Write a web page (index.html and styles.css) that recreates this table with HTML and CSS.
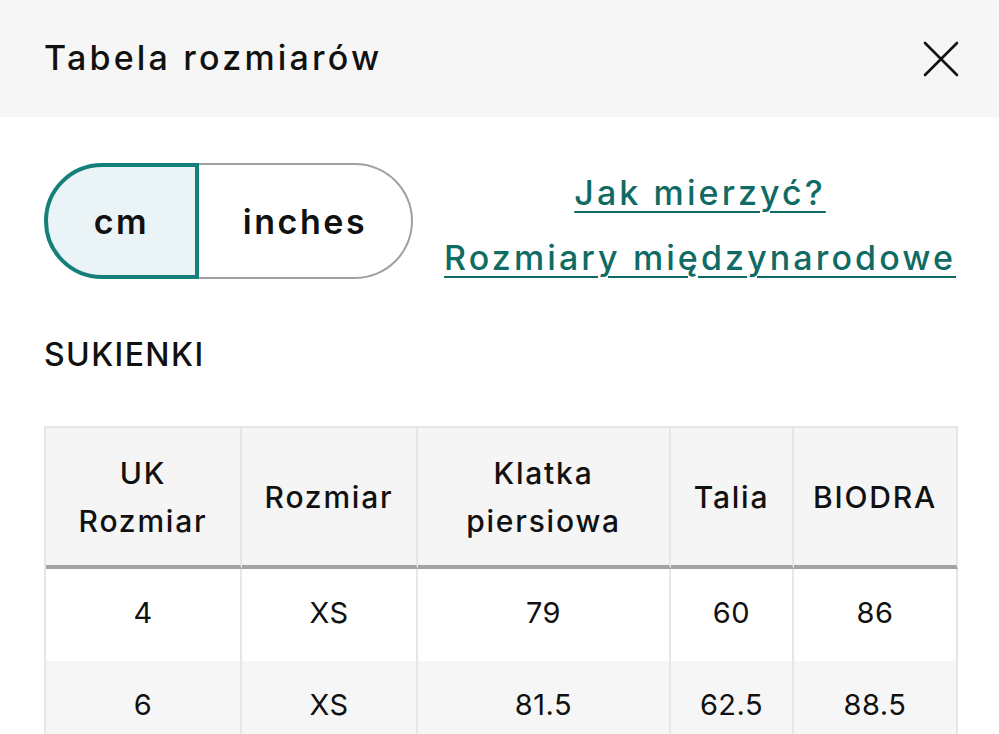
FILE: index.html
```html
<!DOCTYPE html>
<html lang="pl">
<head>
<meta charset="utf-8">
<title>Tabela rozmiarów</title>
<link rel="stylesheet" href="styles.css">
</head>
<body>
<header class="modal-header">
  <h1 class="modal-title">Tabela rozmiarów</h1>
  <button class="close-btn" aria-label="Zamknij">
    <svg width="36" height="36" viewBox="0 0 36 36"><path d="M2 2 L34 34 M34 2 L2 34" stroke="#111" stroke-width="2.6" fill="none" stroke-linecap="round"/></svg>
  </button>
</header>
<main class="content">
  <section class="controls">
    <div class="unit-toggle">
      <button class="unit unit-active">cm</button>
      <button class="unit unit-inactive">inches</button>
    </div>
    <nav class="links">
      <a href="#" class="link">Jak mierzyć?</a>
      <a href="#" class="link">Rozmiary międzynarodowe</a>
    </nav>
  </section>
  <h2 class="section-title">SUKIENKI</h2>
  <table class="size-table">
    <thead>
      <tr>
        <th class="c1">UK<br>Rozmiar</th>
        <th class="c2">Rozmiar</th>
        <th class="c3">Klatka<br>piersiowa</th>
        <th class="c4">Talia</th>
        <th class="c5">BIODRA</th>
      </tr>
    </thead>
    <tbody>
      <tr>
        <td>4</td><td>XS</td><td>79</td><td>60</td><td>86</td>
      </tr>
      <tr class="alt">
        <td>6</td><td>XS</td><td>81.5</td><td>62.5</td><td>88.5</td>
      </tr>
    </tbody>
  </table>
</main>
</body>
</html>
```
FILE: styles.css
```css
* { box-sizing: border-box; }
html, body { margin: 0; padding: 0; }
body {
  font-family: Inter, "Noto Sans", sans-serif;
  color: #111;
  background: #fff;
  width: 999px;
  height: 734px;
  overflow: hidden;
}
.modal-header {
  height: 117px;
  background: #f6f6f6;
  display: flex;
  align-items: center;
  justify-content: space-between;
  padding: 0 40px 0 44px;
}
.modal-title {
  margin: 0;
  font-size: 34px;
  font-weight: 500;
  letter-spacing: 3.2px;
  padding-bottom: 2px;
}
.close-btn {
  border: 0;
  background: none;
  padding: 0;
  width: 36px;
  height: 36px;
  display: flex;
}
.content {
  padding: 46px 43px 0 44px;
}
.controls {
  display: flex;
  justify-content: space-between;
  align-items: flex-start;
}
.unit-toggle {
  display: flex;
  width: 369px;
  height: 116px;
}
.unit {
  font-family: inherit;
  font-size: 34px;
  font-weight: 600;
  letter-spacing: 2.6px;
  color: #111;
  margin: 0;
  padding: 0;
}
.unit-active {
  width: 155px;
  background: #eaf3f5;
  border: 4px solid #15807a;
  border-radius: 58px 0 0 58px;
}
.unit-inactive {
  flex: 1;
  background: #fff;
  border: 2px solid #a0a0a0;
  border-left: 0;
  border-radius: 0 58px 58px 0;
}
.links {
  display: flex;
  flex-direction: column;
  align-items: center;
  gap: 17px;
  padding-top: 6px;
}
.link {
  color: #0f6b64;
  font-size: 34px;
  font-weight: 500;
  letter-spacing: 3.1px;
  line-height: 48px;
  text-decoration: underline;
  text-decoration-thickness: 2px;
  text-underline-offset: 6px;
}
.section-title {
  margin: 53px 0 0;
  font-size: 32px;
  font-weight: 500;
  letter-spacing: 1.4px;
  line-height: 40px;
}
.size-table {
  margin-top: 51px;
  width: 912px;
  border-collapse: separate;
  border-spacing: 0;
  table-layout: fixed;
  border-top: 2px solid #e6e6e6;
  border-left: 2px solid #e6e6e6;
}
.size-table th,
.size-table td {
  text-align: center;
  border-right: 2px solid #e6e6e6;
  padding: 0;
}
.size-table th {
  background: #f5f5f5;
  height: 141px;
  font-size: 30px;
  font-weight: 500;
  letter-spacing: 1.8px;
  line-height: 48px;
  border-bottom: 4px solid #a3a3a3;
}
.size-table td {
  height: 92px;
  padding-bottom: 5px;
  font-size: 29px;
  font-weight: 400;
  letter-spacing: 0.5px;
}
.size-table tr.alt td { background: #f6f6f6; }
.c1 { width: 196px; }
.c2 { width: 176px; }
.c3 { width: 253px; }
.c4 { width: 123px; }
.c5 { width: 164px; }
```
